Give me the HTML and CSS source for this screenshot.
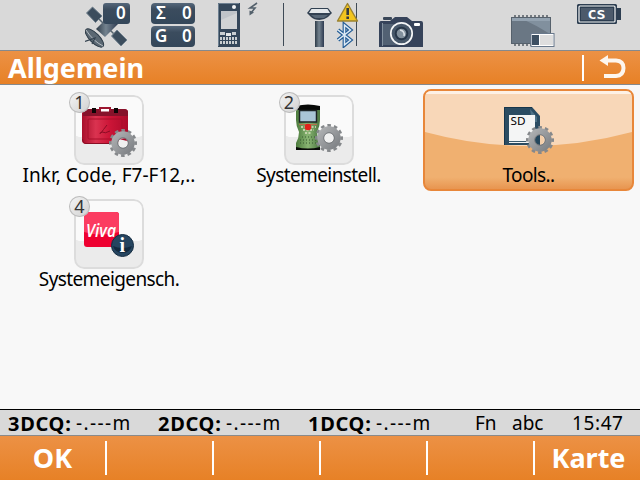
FILE: index.html
```html
<!DOCTYPE html>
<html lang="de">
<head>
    <meta charset="UTF-8">
    <meta name="viewport" content="width=device-width, initial-scale=1.0">
    <title>Allgemein</title>
    <link rel="stylesheet" href="styles.css">
</head>
<body>
    <svg class="defs" width="0" height="0">
        <defs>
            <linearGradient id="gearFill" x1="0" y1="0" x2="1" y2="1">
                <stop offset="0" stop-color="#adafb1"/>
                <stop offset="1" stop-color="#7f8286"/>
            </linearGradient>
            <linearGradient id="slate" x1="0" y1="0" x2="0" y2="1">
                <stop offset="0" stop-color="#55677a"/>
                <stop offset=".3" stop-color="#3b4c5e"/>
                <stop offset="1" stop-color="#34475a"/>
            </linearGradient>
            <linearGradient id="metal" x1="0" y1="0" x2="1" y2="0">
                <stop offset="0" stop-color="#2d3a47"/>
                <stop offset=".45" stop-color="#74838f"/>
                <stop offset="1" stop-color="#2d3a50"/>
            </linearGradient>
            <linearGradient id="red" x1="0" y1="0" x2="1" y2="0">
                <stop offset="0" stop-color="#a80f2b"/>
                <stop offset=".3" stop-color="#da3350"/>
                <stop offset=".6" stop-color="#cc1537"/>
                <stop offset="1" stop-color="#ad0b2b"/>
            </linearGradient>
            <linearGradient id="green" x1="0" y1="0" x2="1" y2="0">
                <stop offset="0" stop-color="#4b7a3c"/>
                <stop offset=".5" stop-color="#89b573"/>
                <stop offset="1" stop-color="#4b7640"/>
            </linearGradient>
            <symbol id="gear" viewBox="-15 -15 30 30">
                <circle r="12.6" fill="none" stroke="#85888b" stroke-width="2.8" pathLength="24" stroke-dasharray="1.1 .9" stroke-dashoffset=".5"/>
                <circle r="8.4" fill="none" stroke="url(#gearFill)" stroke-width="6.6"/>
                <circle r="5.3" fill="none" stroke="#6b6e72" stroke-width=".8"/>
            </symbol>
        </defs>
    </svg>

    <header class="icon-bar">
        <svg class="satellite" width="47" height="46" viewBox="85 2 47 46">
            <path d="M92.500 7 L102 16 L95.500 22.500 L86.500 13 Z" fill="#3c4d5d" stroke="#71818e"/>
            <path d="M99 19 L104 24 M110 30 L114 34" stroke="#56646f" stroke-width="1.500"/>
            <path d="M104 21 L118 24 L105 37 L96 29 Z" fill="url(#metal)"/>
            <path d="M117 30 L127 40 L121 46 L111.500 36 Z" fill="#3c4d5d" stroke="#71818e"/>
            <ellipse cx="94.500" cy="38" rx="12" ry="4.800" transform="rotate(45 94.500 38)" fill="#5b6873" stroke="#2d3b47"/>
            <path d="M86 30 Q93 41 103 46" fill="none" stroke="#cbd1d5" stroke-width=".8"/>
            <path d="M85 41.500 L95 38 L92 44" fill="none" stroke="#34424f" stroke-width="1.200"/>
            <rect x="103" y="3" width="27" height="21" rx="3" fill="url(#slate)"/>
            <text class="pixel" x="116" y="19">0</text>
        </svg>
        <svg class="counts" width="45" height="46" viewBox="151 2 45 46">
            <rect x="151" y="3" width="44" height="21" rx="4" fill="url(#slate)"/>
            <rect x="151" y="26" width="44" height="21" rx="4" fill="url(#slate)"/>
            <text class="pixel" x="156" y="19">Σ</text>
            <text class="pixel" x="182" y="19">0</text>
            <text class="pixel" x="155" y="42">G</text>
            <text class="pixel" x="182" y="42">0</text>
        </svg>
        <svg class="handheld" width="42" height="46" viewBox="217 2 42 46">
            <rect x="218" y="3" width="22" height="44" fill="#34475a"/>
            <path d="M218.500 46 V3.500 H239" fill="none" stroke="#6d7f90"/>
            <rect x="221" y="11" width="16" height="18" fill="#bfc4c9"/>
            <path d="M221 29 V20 L237 13 V29 Z" fill="#d0d3d5"/>
            <circle cx="234" cy="7" r="2" fill="#f1f3f4"/>
            <rect x="220" y="32" width="5" height="3" fill="#c9ced1"/>
            <rect x="226" y="33" width="5" height="3" fill="#e4e7e8"/>
            <rect x="232" y="32" width="4" height="3" fill="#c9ced1"/>
            <path d="M220 38.500 H237 M220 42.500 H237" stroke="#c9ced1" stroke-width="3" stroke-dasharray="2 1"/>
            <path d="M257 3 L250 8 L255 8 L251 13" fill="none" stroke="#54616c" stroke-width="1.600"/>
            <path d="M249.500 10.500 V15.500 L254 12.500 Z" fill="#54616c"/>
        </svg>
        <div class="divider divider-left"></div>
        <svg class="antenna" width="54" height="46" viewBox="306 2 54 46">
            <path d="M356.500 3 V46" stroke="#3e4a56"/>
            <rect x="315" y="21" width="9" height="26" fill="url(#metal)"/>
            <path d="M311 8 H328 L332 13 L328 17 Q324 20 319.500 20 Q314 20 311 17 L307 13 Z" fill="#324152"/>
            <path d="M311.500 9 H327.500 L330 13 H309 Z" fill="#e4e8eb"/>
            <path d="M311 15 H328 L324 18 H315 Z" fill="#586878"/>
            <path d="M347.500 3.500 L357.500 21 H337.500 Z" fill="#f3c51e" stroke="#9b8230" stroke-width="1.400" stroke-linejoin="round"/>
            <path d="M347.700 8 V15" stroke="#363b3f" stroke-width="2.600"/>
            <rect x="346.400" y="16.500" width="2.600" height="2.500" fill="#363b3f"/>
            <path d="M338 30 L350.500 40 L344.500 45 V25 L350.500 30 L338 40" fill="none" stroke="#245d96" stroke-width="3.800"/>
            <path d="M338 30 L350.500 40 L344.500 45 V25 L350.500 30 L338 40" fill="none" stroke="#dfebf5" stroke-width="1.500"/>
        </svg>
        <svg class="camera" width="46" height="32" viewBox="379 16 46 32">
            <rect x="383" y="17" width="9" height="3" rx="1" fill="#3a4758"/>
            <path d="M379 23 Q379 21 381 21 H390 L395 17 H407 L412 21 H421 Q423 21 423 23 V47 H379 Z" fill="#36435a"/>
            <path d="M383 24 H400 V45 H383 Z" fill="#526173"/>
            <path d="M382.500 23 V46" stroke="#8492a0"/>
            <rect x="414" y="23" width="6" height="3" rx="1" fill="#fff"/>
            <circle cx="401.500" cy="33.500" r="10.700" fill="#48586a" stroke="#f4f6f7" stroke-width="1.700"/>
            <circle cx="401.500" cy="33.500" r="6.800" fill="#273648"/>
            <circle cx="401.500" cy="33.500" r="4.800" fill="#82909c"/>
            <path d="M400 30 Q405 31 404 36" fill="none" stroke="#dbe1e6" stroke-width="1.500"/>
        </svg>
        <svg class="memory" width="45" height="33" viewBox="511 15 45 33">
            <path d="M514 16.500 H549 M514 44.500 H532" stroke="#747a80" stroke-width="3" stroke-dasharray="2 2"/>
            <rect x="511.500" y="17.500" width="39" height="26" fill="#6a7784" stroke="#56616c"/>
            <path d="M512 20 H524 Q534 24 550 34 V20 Z" fill="#81909e"/>
            <rect x="512" y="18" width="38" height="3" fill="#93a2b0"/>
            <rect x="531" y="33.500" width="23" height="13" fill="#fff" stroke="#69798c"/>
            <rect x="532" y="35" width="7" height="10" fill="#3e5062"/>
            <rect x="540" y="35" width="13" height="10" fill="#dedede"/>
        </svg>
        <svg class="battery" width="46" height="22" viewBox="576 3 46 22">
            <rect x="577" y="4" width="40" height="20" rx="1.500" fill="#2d3e51"/>
            <rect x="617" y="8" width="4" height="12" fill="#2d3e51"/>
            <rect x="579" y="6" width="36" height="16" rx="1" fill="none" stroke="#f2f3f4" stroke-width="1.200"/>
            <rect x="581" y="8" width="32" height="12" fill="#4c5a6b"/>
            <text class="cs" x="587.500" y="18.500" textLength="18" lengthAdjust="spacingAndGlyphs">CS</text>
        </svg>
    </header>

    <div class="title-bar">
        <h1>Allgemein</h1>
        <div class="back">
            <svg width="28" height="26" viewBox="599 55 28 26">
                <path d="M606 60.500 H616 Q623.500 61 623.500 68 Q623.500 75.500 616 76 H604" fill="none" stroke="#fdf6ef" stroke-width="4"/>
                <path d="M599.500 60.500 L608 55 V66 Z" fill="#fdf6ef"/>
            </svg>
        </div>
    </div>

    <main class="menu">
        <div class="item">
            <div class="icon">
                <span class="badge">1</span>
                <svg width="70" height="70" viewBox="74 95 70 70">
                    <rect x="82" y="109" width="46" height="35" rx="4" fill="url(#red)"/>
                    <path d="M83 116 V112 Q83 109 86 109 H124 Q128 109 128 112 V116 Z" fill="#86122a"/>
                    <rect x="101" y="108.500" width="8" height="3" fill="#fff"/>
                    <path d="M100 111 V108 H110 V111" fill="none" stroke="#9c1730" stroke-width="2"/>
                    <rect x="92" y="108" width="4" height="5" fill="#0c0506"/>
                    <rect x="114" y="108" width="4" height="5" fill="#0c0506"/>
                    <rect x="88" y="119" width="34" height="20" rx="1" fill="none" stroke="#a80e2b"/>
                    <path d="M107 125 Q103 130 101 133 Q98 134 102 132 Q105 134 110 131" fill="none" stroke="#8d0c24"/>
                    <path d="M82.500 139 Q83 143.500 86 143.500 H124" fill="none" stroke="#8a0d24"/>
                    <circle cx="123" cy="143" r="5" fill="#f0f0f0"/>
                    <path d="M119 139 L127 141 L126 138 Z" fill="#a90d2b"/>
                    <use href="#gear" x="108" y="128" width="30" height="30"/>
                </svg>
            </div>
            <span class="label">Inkr, Code, F7-F12,..</span>
        </div>
        <div class="item">
            <div class="icon">
                <span class="badge">2</span>
                <svg width="70" height="70" viewBox="284 95 70 70">
                    <path d="M296 108 H320 V120 Q320 126 317 132 Q317 138 320 143 V150 H296 V143 Q299 138 299 132 Q296 126 296 120 Z" fill="url(#green)"/>
                    <path d="M296 106 Q308 103 320 106 V110 H296 Z M296 147 Q308 150 320 147 V150 H296 Z" fill="#080a08"/>
                    <rect x="299.500" y="110.500" width="17" height="11.500" fill="#a9c5d6" stroke="#1d2426" stroke-width="1.500"/>
                    <path d="M299 124.500 H317" stroke="#b86f4c"/>
                    <path d="M301 127 H316 M303 130 H314 M305 133 H312" stroke="#dce1c2" stroke-width="1.500" stroke-dasharray="2 1.500"/>
                    <circle cx="308" cy="127" r="3.300" fill="#e0221c"/>
                    <path d="M302 137 H315 M300 140 H317 M300 143 H318" stroke="#365831" stroke-dasharray="1 2"/>
                    <circle cx="329" cy="138" r="5" fill="#f0f0f0"/>
                    <use href="#gear" x="314" y="123" width="30" height="30"/>
                </svg>
            </div>
            <span class="label tight">Systemeinstell.</span>
        </div>
        <div class="item selected">
            <svg class="shine" width="207" height="98" viewBox="0 0 206 98" preserveAspectRatio="none">
                <path d="M0 0 H206 V41 Q103 69 0 41 Z" fill="#f8d7b8"/>
                <path d="M0 1.500 H206" stroke="#fdf1e6" stroke-width="3"/>
            </svg>
            <div class="icon">
                <svg width="70" height="70" viewBox="494 95 70 70">
                    <path d="M504 107 H532 L540 116 V145 H504 Z" fill="#2b4c62"/>
                    <path d="M504.500 145 V107.500 H532" fill="none" stroke="#17364c"/>
                    <path d="M530 109 L537 117 V122 H532 Z" fill="#4f7287"/>
                    <rect x="509" y="115" width="26" height="28" fill="#f4f5f5"/>
                    <path d="M509 141.500 H526" stroke="#3c5a6c"/>
                    <text class="sd" x="510.500" y="125" textLength="15" lengthAdjust="spacingAndGlyphs">SD</text>
                    <path d="M540 134.500 A5.500 5.500 0 0 1 540 145 Z" fill="#f5cfaa"/>
                    <path d="M540 134.500 A5.500 5.500 0 0 0 540 145 Z" fill="#24465c"/>
                    <use href="#gear" x="525" y="125" width="30" height="30"/>
                </svg>
            </div>
            <span class="label tight">Tools..</span>
        </div>
        <div class="item">
            <div class="icon">
                <span class="badge">4</span>
                <svg width="70" height="70" viewBox="74 199 70 70">
                    <rect x="84" y="212" width="35" height="35" rx="3" fill="#ee0030"/>
                    <path d="M84 232 V215 Q84 212 87 212 H116 Q119 212 119 215 V232 Q101 237 84 232 Z" fill="#fb3c61"/>
                    <text class="viva" x="86" y="237" textLength="30" lengthAdjust="spacingAndGlyphs">Viva</text>
                    <circle cx="122.500" cy="245.500" r="11" fill="#264560" stroke="#152d42"/>
                    <path d="M113 246 Q122 250 132 246 A10 10 0 0 1 113 246" fill="#132b40"/>
                    <text class="info" x="119.500" y="252">i</text>
                </svg>
            </div>
            <span class="label tight">Systemeigensch.</span>
        </div>
    </main>

    <div class="status">
        <span class="reading"><b>3DCQ:</b><span class="value">-.---m</span></span>
        <span class="reading"><b>2DCQ:</b><span class="value">-.---m</span></span>
        <span class="reading"><b>1DCQ:</b><span class="value">-.---m</span></span>
        <span class="fn">Fn</span>
        <span class="abc">abc</span>
        <span class="time">15:47</span>
    </div>

    <footer class="softkeys">
        <button type="button">OK</button>
        <button type="button"></button>
        <button type="button"></button>
        <button type="button"></button>
        <button type="button"></button>
        <button type="button">Karte</button>
    </footer>
</body>
</html>
```
FILE: styles.css
```css
* {
    box-sizing: border-box;
}
body {
    margin: 0;
    width: 640px;
    height: 480px;
    overflow: hidden;
    display: flex;
    flex-direction: column;
    font-family: "Noto Sans", sans-serif;
    color: #000;
    background: #f8f8f8;
}
svg {
    display: block;
    flex: none;
}
.defs {
    position: absolute;
}
.icon-bar {
    height: 50px;
    flex: none;
    display: flex;
    align-items: flex-start;
    padding: 2px 0 0 85px;
    background: #d9d9d9;
}
.counts {
    margin-left: 19px;
}
.handheld {
    margin-left: 21px;
}
.divider {
    width: 1px;
    height: 43px;
    margin-top: 1px;
    background: #3e4a56;
}
.divider-left {
    margin-left: 24px;
}
.antenna {
    margin-left: 22px;
}
.camera {
    margin: 14px 0 0 19px;
}
.memory {
    margin: 13px 0 0 86px;
}
.battery {
    margin: 1px 0 0 20px;
}
.pixel {
    font: 600 17px "Noto Sans", sans-serif;
    fill: #fff;
}
.cs {
    font: bold 13px "DejaVu Sans Mono", monospace;
    fill: #fff;
}
.sd {
    font: 11px "Noto Sans", sans-serif;
}
.viva {
    font: italic 600 18px "Open Sans", sans-serif;
    fill: #fff;
}
.info {
    font: bold 20px "Liberation Serif", serif;
    fill: #fff;
}
.title-bar {
    height: 35px;
    flex: none;
    display: flex;
    align-items: center;
    justify-content: space-between;
    padding: 0 13px 0 8px;
    border-top: 1px solid #85898d;
    border-bottom: 1px solid #85898d;
    background: linear-gradient(#ec9145, #e78126);
}
h1 {
    margin: 0;
    font-size: 27px;
    line-height: 32px;
    color: #fff;
}
.back {
    display: flex;
    align-items: center;
    height: 26px;
    padding-left: 15px;
    border-left: 2px solid #fff;
}
.menu {
    flex: 1;
    display: grid;
    grid-template-columns: 210px 209px 211px;
    grid-auto-rows: 102px;
    row-gap: 2px;
    padding: 4px 6px 0 4px;
}
.item {
    position: relative;
    display: flex;
    flex-direction: column;
    align-items: center;
    padding-top: 6px;
}
.icon {
    position: relative;
    width: 70px;
    height: 70px;
    border-radius: 10px;
    background: radial-gradient(ellipse 55px 8px at 50% 50%, #fafafa 98%, transparent 100%), linear-gradient(#fafafa 50%, #ebebeb 50%);
    box-shadow: inset 0 0 0 2px #dcdcdc;
}
.badge {
    position: absolute;
    left: -5px;
    top: -3px;
    width: 21px;
    height: 21px;
    border-radius: 50%;
    background: linear-gradient(135deg, #f6f6f6, #cfcfcf);
    box-shadow: inset 0 0 0 1px #bcbcbc;
    color: #333;
    font-size: 18px;
    line-height: 21px;
    text-align: center;
}
.label {
    position: relative;
    font-size: 19px;
    line-height: 21px;
    white-space: nowrap;
}
.tight {
    letter-spacing: -0.6px;
}
.selected {
    padding-top: 4px;
    border: 2px solid #e8873a;
    border-radius: 8px;
    background: linear-gradient(#f0b070 88%, #e89550);
    overflow: hidden;
}
.selected .icon {
    background: none;
    box-shadow: none;
}
.shine {
    position: absolute;
    left: 0;
    top: 0;
}
.status {
    height: 27px;
    flex: none;
    display: flex;
    padding-left: 8px;
    border-top: 1px solid #000;
    border-bottom: 1px solid #8a8a8a;
    background: #d9d9d9;
    font-size: 19px;
    line-height: 27px;
    white-space: nowrap;
}
.reading {
    display: flex;
    width: 150px;
}
.reading b {
    width: 68px;
    font-size: 20px;
    letter-spacing: 0.7px;
}
.value {
    letter-spacing: 1.4px;
}
.fn {
    width: 37px;
    margin-left: 17px;
}
.abc {
    width: 60px;
}
.time {
    letter-spacing: 0.6px;
}
.softkeys {
    height: 44px;
    flex: none;
    display: grid;
    grid-template-columns: repeat(6, 107px);
    background: linear-gradient(#ec9145, #e78126);
}
.softkeys button {
    height: 34px;
    margin: 5px 0;
    padding: 0;
    border: none;
    border-right: 2px solid #fff;
    background: none;
    font: inherit;
    font-weight: bold;
    font-size: 27px;
    line-height: 34px;
    color: #fff;
}
.softkeys button:last-child {
    border-right: none;
}
```
